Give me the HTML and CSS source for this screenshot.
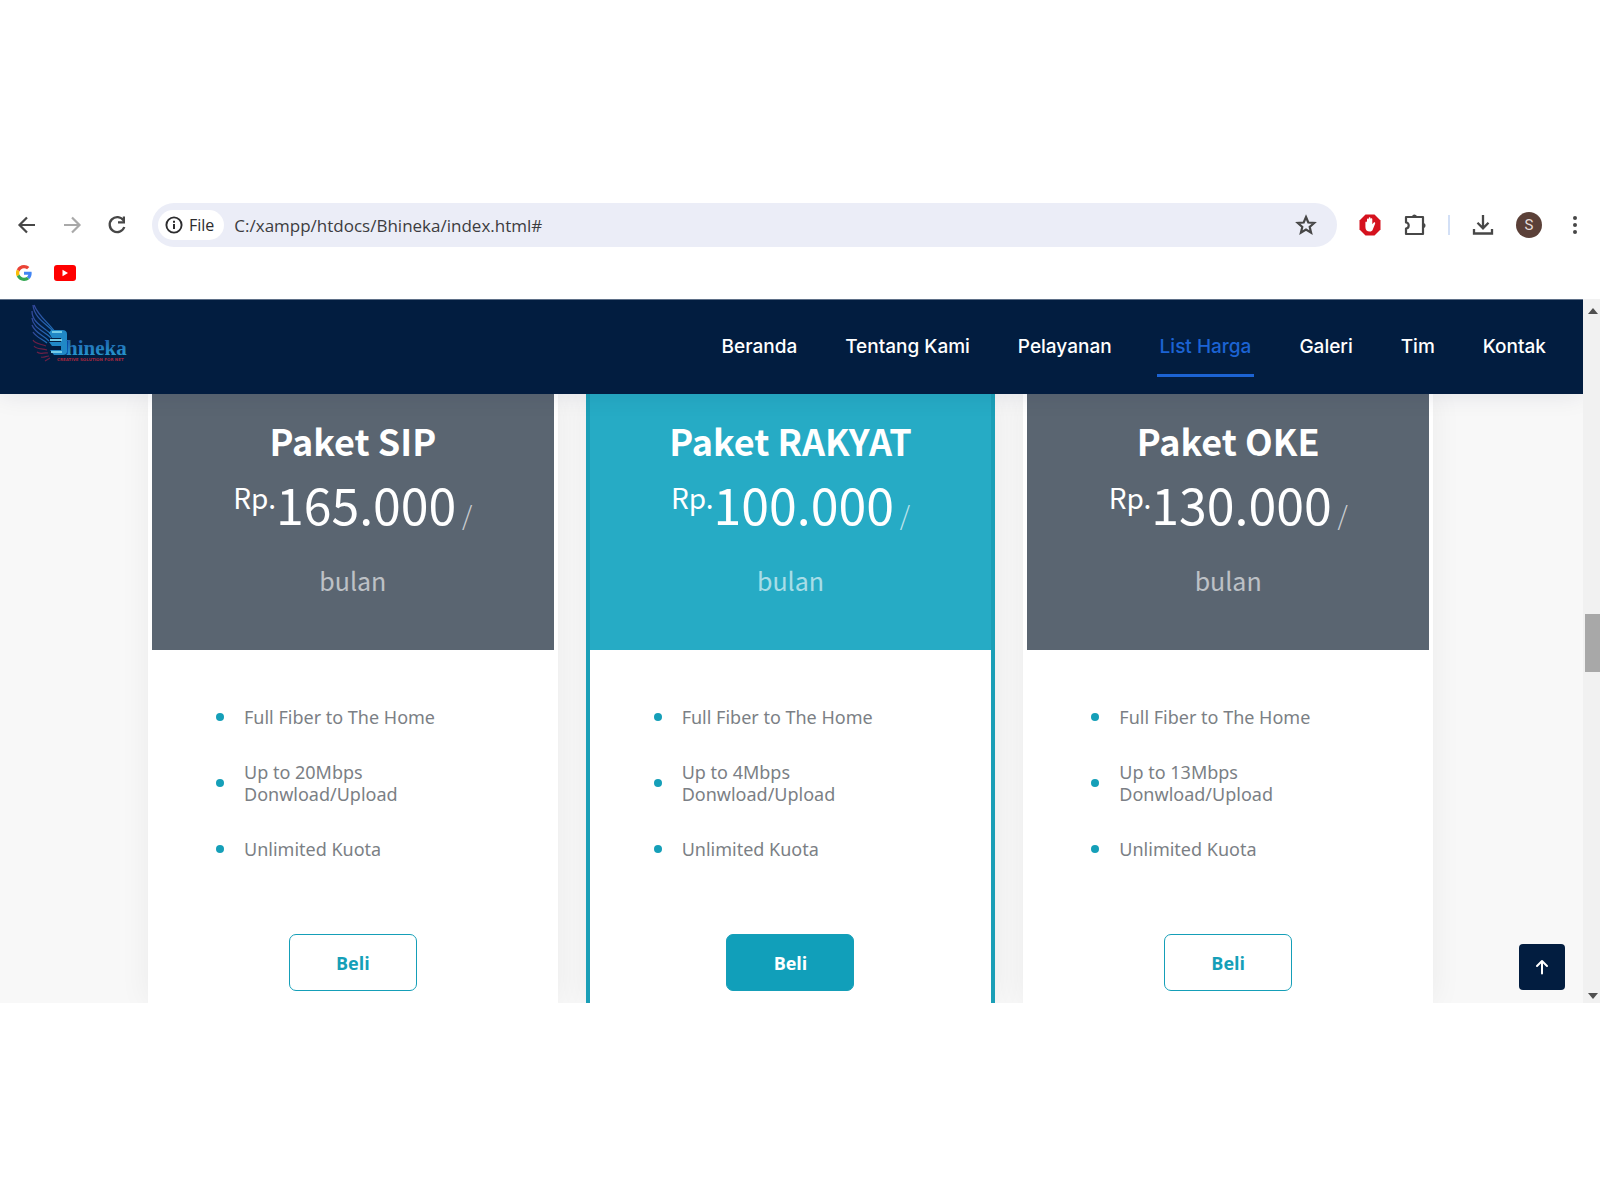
FILE: index.html
```html
<!DOCTYPE html>
<html lang="id">
<head>
<meta charset="utf-8">
<title>Bhineka</title>
<link rel="stylesheet" href="styles.css">
</head>
<body>
<div class="window">
  <div class="toolbar">
    <button class="tool" aria-label="Back"><svg width="24" height="24" viewBox="0 0 24 24"><path d="M20 12H5M12 4.500L4.500 12l7.500 7.500" fill="none" stroke="#474747" stroke-width="2.200"/></svg></button>
    <button class="tool" aria-label="Forward"><svg width="24" height="24" viewBox="0 0 24 24"><path d="M4 12h15M12 4.500l7.500 7.500-7.500 7.500" fill="none" stroke="#a9a9a9" stroke-width="2.200"/></svg></button>
    <button class="tool" aria-label="Reload"><svg width="24" height="24" viewBox="0 0 24 24"><path d="M18.500 7.500A7.500 7.500 0 1 0 19.300 14" fill="none" stroke="#474747" stroke-width="2.300"/><path d="M20 3.500v7h-7V8.300h4.800V3.500z" fill="#474747"/></svg></button>
    <div class="omnibox">
      <button class="site-chip"><svg width="20" height="20" viewBox="0 0 20 20"><circle cx="10" cy="10" r="7.600" fill="none" stroke="#2c2c2e" stroke-width="1.900"/><path d="M10 9v5M10 5.700v2" stroke="#2c2c2e" stroke-width="2"/></svg>File</button>
      <input class="url" type="text" aria-label="Address" value="C:/xampp/htdocs/Bhineka/index.html#">
      <button class="tool" aria-label="Bookmark"><svg width="24" height="24" viewBox="0 0 24 24"><path d="M12 4l2.300 5.500 5.900.5-4.500 3.900 1.400 5.800-5.100-3.100-5.100 3.100 1.400-5.800L3.800 10l5.900-.5z" fill="none" stroke="#474747" stroke-width="2.200"/></svg></button>
    </div>
    <div class="actions">
      <button class="tool" aria-label="AdBlock"><svg width="24" height="24" viewBox="0 0 24 24"><path d="M7.500 1.500h9l6 6v9l-6 6h-9l-6-6v-9z" fill="#d5121e"/><path d="M7.400 9.500c0-1.200 1.600-1.200 1.600 0V11V6.500c0-1.300 1.700-1.300 1.700 0V5.300c0-1.300 1.800-1.300 1.800 0v1c0-1.300 1.800-1.300 1.800 0v5l1.300-1.600c1-.9 2 0 1.500 1l-2.300 5.800c-.5 1.500-1.600 2-3 2-2.700 0-4.400-1.500-4.400-4.500z" fill="#fff"/></svg></button>
      <button class="tool" aria-label="Extensions"><svg width="24" height="24" viewBox="0 0 24 24"><path d="M3 4h17v17H3v-5.500c3.600-.3 3.600-5.700 0-6z" fill="none" stroke="#474747" stroke-width="2.200" stroke-linejoin="round"/><path d="M9 4a2.500 2.500 0 0 1 5 0zM20 10a2.500 2.500 0 0 1 0 5z" fill="#474747"/></svg></button>
      <span class="divider"></span>
      <button class="tool" aria-label="Downloads"><svg width="24" height="24" viewBox="0 0 24 24"><path d="M12 2v13M6.500 9.800L12 15.300l5.500-5.500M3 16v4.500h18V16" fill="none" stroke="#474747" stroke-width="2.300"/></svg></button>
      <button class="avatar">S</button>
      <button class="tool" aria-label="Menu"><svg width="24" height="24" viewBox="0 0 24 24" fill="#474747"><circle cx="12" cy="5" r="2"/><circle cx="12" cy="12" r="2"/><circle cx="12" cy="19" r="2"/></svg></button>
    </div>
  </div>
  <div class="bookmarks">
    <a href="#" aria-label="Google"><svg width="16" height="16" viewBox="0 0 48 48"><path fill="#ea4335" d="M24 9.500c3.500 0 6.700 1.200 9.200 3.600l6.900-6.900C35.900 2.400 30.500 0 24 0 14.600 0 6.500 5.400 2.600 13.200l8 6.200C12.400 13.700 17.700 9.500 24 9.500z"/><path fill="#4285f4" d="M47 24.500c0-1.600-.2-3.100-.4-4.500H24v9h12.900c-.6 3-2.200 5.500-4.700 7.200l7.700 6C44.400 38 47 31.800 47 24.500z"/><path fill="#fbbc05" d="M10.500 28.600a14.500 14.500 0 0 1 0-9.200l-8-6.200a24 24 0 0 0 0 21.600z"/><path fill="#34a853" d="M24 48c6.500 0 11.900-2.100 15.900-5.800l-7.700-6c-2.200 1.500-4.900 2.300-8.200 2.300-6.300 0-11.600-4.200-13.500-9.900l-8 6.200C6.500 42.600 14.600 48 24 48z"/></svg></a>
    <a href="#" aria-label="YouTube"><svg width="22" height="16" viewBox="0 0 22 16"><rect width="22" height="16" rx="3" fill="#f00"/><path d="M8.500 4.700v6.600l5.500-3.300z" fill="#fff"/></svg></a>
  </div>

  <div class="viewport">
    <div class="page">
      <header class="site-header">
        <a class="logo" href="#" aria-label="Bhineka">
          <svg width="100" height="64" viewBox="0 0 100 64">
            <defs>
              <linearGradient id="wing" x1="0" y1="0" x2="1" y2="1"><stop offset="0" stop-color="#33479b"/><stop offset="1" stop-color="#1d6fb8"/></linearGradient>
              <linearGradient id="word" x1="0" y1="0" x2="0" y2="1"><stop offset="0" stop-color="#1c56a8"/><stop offset="1" stop-color="#2aa6d6"/></linearGradient>
            </defs>
            <g fill="none" stroke="url(#wing)" stroke-width="1.300">
              <path d="M3 2c1 12 12 18 20 26"/><path d="M4 2c5 12 14 17 21 27"/><path d="M2 8c0 12 12 16 20 24"/><path d="M2 15c1 10 12 13 19 20"/><path d="M2 22c3 8 11 10 17 16"/><path d="M3 29c3 5 9 7 14 11"/>
            </g>
            <g fill="none" stroke="#6c2045" stroke-width="1.200">
              <path d="M3 37c2 4 8 4 13 6"/><path d="M4 43c3 4 8 2 13 4"/><path d="M7 49c3 3 7 0 11 1"/><path d="M11 54c3 1 5-1 8-1"/><path d="M15 58l5-3"/>
            </g>
            <path d="M21 27h11q5 0 5 4v18q0 3-4 3h-9l-4-5h11v-4H22l-3-4h12v-4H22l-3-5z" fill="#2088c6"/>
            <path d="M22 29h10M20 37h12M21 49h11" stroke="#74cbe6" stroke-width="2"/>
            <text class="logo-word" x="36" y="52" fill="url(#word)">hineka</text>
            <text class="logo-tag" x="27" y="58">CREATIVE SOLUTION FOR NET</text>
          </svg>
        </a>
        <nav class="nav">
          <a href="#">Beranda</a>
          <a href="#">Tentang Kami</a>
          <a href="#">Pelayanan</a>
          <a class="active" href="#">List Harga</a>
          <a href="#">Galeri</a>
          <a href="#">Tim</a>
          <a href="#">Kontak</a>
        </nav>
      </header>

      <main class="pricing">
        <article class="card">
          <div class="card-head">
            <h2>Paket SIP</h2>
            <p class="price"><span class="currency">Rp.</span>165.000<span class="slash"> /</span></p>
            <p class="period">bulan</p>
          </div>
          <ul>
            <li>Full Fiber to The Home</li>
            <li>Up to 20Mbps Donwload/Upload</li>
            <li>Unlimited Kuota</li>
          </ul>
          <button class="buy">Beli</button>
        </article>
        <article class="card featured">
          <div class="card-head">
            <h2>Paket RAKYAT</h2>
            <p class="price"><span class="currency">Rp.</span>100.000<span class="slash"> /</span></p>
            <p class="period">bulan</p>
          </div>
          <ul>
            <li>Full Fiber to The Home</li>
            <li>Up to 4Mbps Donwload/Upload</li>
            <li>Unlimited Kuota</li>
          </ul>
          <button class="buy">Beli</button>
        </article>
        <article class="card">
          <div class="card-head">
            <h2>Paket OKE</h2>
            <p class="price"><span class="currency">Rp.</span>130.000<span class="slash"> /</span></p>
            <p class="period">bulan</p>
          </div>
          <ul>
            <li>Full Fiber to The Home</li>
            <li>Up to 13Mbps Donwload/Upload</li>
            <li>Unlimited Kuota</li>
          </ul>
          <button class="buy">Beli</button>
        </article>
      </main>
      <a class="to-top" href="#" aria-label="Back to top"><svg width="24" height="24" viewBox="0 0 24 24"><path d="M12 18.500V6M7 11l5-5 5 5" fill="none" stroke="#fff" stroke-width="2" stroke-linecap="round" stroke-linejoin="round"/></svg></a>
    </div>
    <div class="scrollbar">
      <svg width="10" height="6" viewBox="0 0 10 6"><path d="M0 6l5-6 5 6z" fill="#505050"/></svg>
      <div class="track"><div class="thumb"></div></div>
      <svg width="10" height="6" viewBox="0 0 10 6"><path d="M0 0l5 6 5-6z" fill="#505050"/></svg>
    </div>
  </div>
</div>
</body>
</html>
```
FILE: styles.css
```css
* { box-sizing: border-box; }

body {
  margin: 0;
  background: #fff;
  font-family: "Open Sans", "Noto Sans", sans-serif;
}

button {
  padding: 0;
  border: 0;
  background: none;
  font: inherit;
}

a { text-decoration: none; }
svg { display: block; }

.window { padding: 197px 0; }

/* Browser toolbar */
.toolbar {
  display: flex;
  align-items: center;
  gap: 21px;
  height: 56px;
  padding: 0 13px 0 15px;
}

.tool {
  display: flex;
  flex: none;
}

.omnibox {
  display: flex;
  flex: 1;
  align-items: center;
  height: 44px;
  margin-left: 2px;
  padding: 0 19px 0 6px;
  border-radius: 22px;
  background: #ebedf7;
}

.site-chip {
  display: flex;
  align-items: center;
  gap: 5px;
  height: 30px;
  padding: 0 10px 0 6px;
  border-radius: 15px;
  background: #fff;
  color: #2c2c2e;
  font-size: 16px;
}

.url {
  flex: 1;
  min-width: 0;
  margin-left: 10px;
  padding: 0;
  border: 0;
  background: none;
  color: #3c3c40;
  font: 17px "Open Sans", sans-serif;
}

.actions {
  display: flex;
  align-items: center;
  gap: 21px;
}

.divider {
  width: 2px;
  height: 20px;
  background: #d3e0f6;
}

.avatar {
  width: 26px;
  height: 26px;
  border-radius: 50%;
  background: #5b4038;
  color: #e6dcd8;
  font: 15px Roboto, sans-serif;
}

.bookmarks {
  display: flex;
  align-items: center;
  gap: 22px;
  height: 46px;
  padding: 0 16px 6px;
}

/* Page area */
.viewport { display: flex; }

.page {
  position: relative;
  flex: 1;
  overflow: hidden;
  background: #f8f8f8;
}

.site-header {
  position: relative;
  z-index: 1;
  display: flex;
  align-items: center;
  justify-content: space-between;
  height: 95px;
  padding: 0 34px 0 30px;
  border-top: 1px solid #5f7088;
  background: #021d40;
  box-shadow: 0 0 24px rgba(2, 29, 64, 0.1);
}

.logo { margin-bottom: 24px; }
.logo-word { font: bold 21px "Liberation Serif", serif; }
.logo-tag { font: bold 4px "DejaVu Sans", sans-serif; fill: #a3283f; }

.nav {
  display: flex;
  gap: 42px;
}

.nav a {
  padding: 15px 3px 13px;
  border-bottom: 3px solid transparent;
  color: #fff;
  font: 500 19px/28px Inter, sans-serif;
}

.nav .active {
  border-color: #1c63d3;
  color: #1c63d3;
}

/* Price cards */
.pricing {
  display: grid;
  grid-template-columns: repeat(3, 1fr);
  gap: 28px;
  padding: 0 150px 0 148px;
}

.card {
  display: flex;
  flex-direction: column;
  align-items: center;
  padding: 0 0 12px;
  border: solid #fff;
  border-width: 0 4px;
  background: #fff;
  box-shadow: 0 0 30px rgba(20, 20, 40, 0.06);
}

.card-head {
  align-self: stretch;
  height: 256px;
  padding-top: 20px;
  background: #5a6571;
  color: #fff;
  font-family: "Noto Sans CJK JP", sans-serif;
  text-align: center;
}

.card h2 {
  margin: 0;
  font-size: 36px;
  font-weight: 700;
  line-height: 52px;
}

.card p { margin: 0; }

.price {
  font-size: 50px;
  line-height: 74px;
}

.currency {
  font-size: 28px;
  line-height: 28px;
  vertical-align: 16px;
}

.slash {
  opacity: 0.7;
  font-size: 26px;
  font-weight: 300;
}

.period {
  opacity: 0.6;
  font-size: 25px;
  line-height: 58px;
}

.card ul {
  display: grid;
  gap: 33px;
  align-self: stretch;
  margin: 0;
  padding: 56px 64px 74px;
  color: #7b7f85;
  font-family: "Noto Sans", sans-serif;
  font-size: 18px;
  line-height: 22px;
  list-style: none;
}

.card li {
  display: flex;
  align-items: center;
  gap: 20px;
}

.card li::before {
  flex: none;
  width: 8px;
  height: 8px;
  border-radius: 50%;
  background: #159fb8;
  content: "";
}

.buy {
  width: 128px;
  height: 57px;
  border: 1px solid #159fb8;
  border-radius: 7px;
  color: #159fb8;
  font-size: 18px;
  font-weight: 700;
}

.featured { border-color: #1b9fb7; }
.featured .card-head { background: #26abc5; }

.featured .buy {
  background: #119fba;
  color: #fff;
}

.to-top {
  position: absolute;
  right: 18px;
  bottom: 13px;
  display: grid;
  place-items: center;
  width: 46px;
  height: 46px;
  border-radius: 4px;
  background: #021d40;
}

/* Page scrollbar */
.scrollbar {
  display: flex;
  flex-direction: column;
  align-items: flex-end;
  gap: 8px;
  width: 17px;
  padding: 9px 2px 4px;
  background: #f1f1f1;
}

.track {
  display: flex;
  flex: 1;
  flex-direction: column;
  align-self: stretch;
  justify-content: center;
  padding-bottom: 22px;
}

.thumb {
  height: 58px;
  margin-right: -2px;
  background: #a8a8a8;
}
```
